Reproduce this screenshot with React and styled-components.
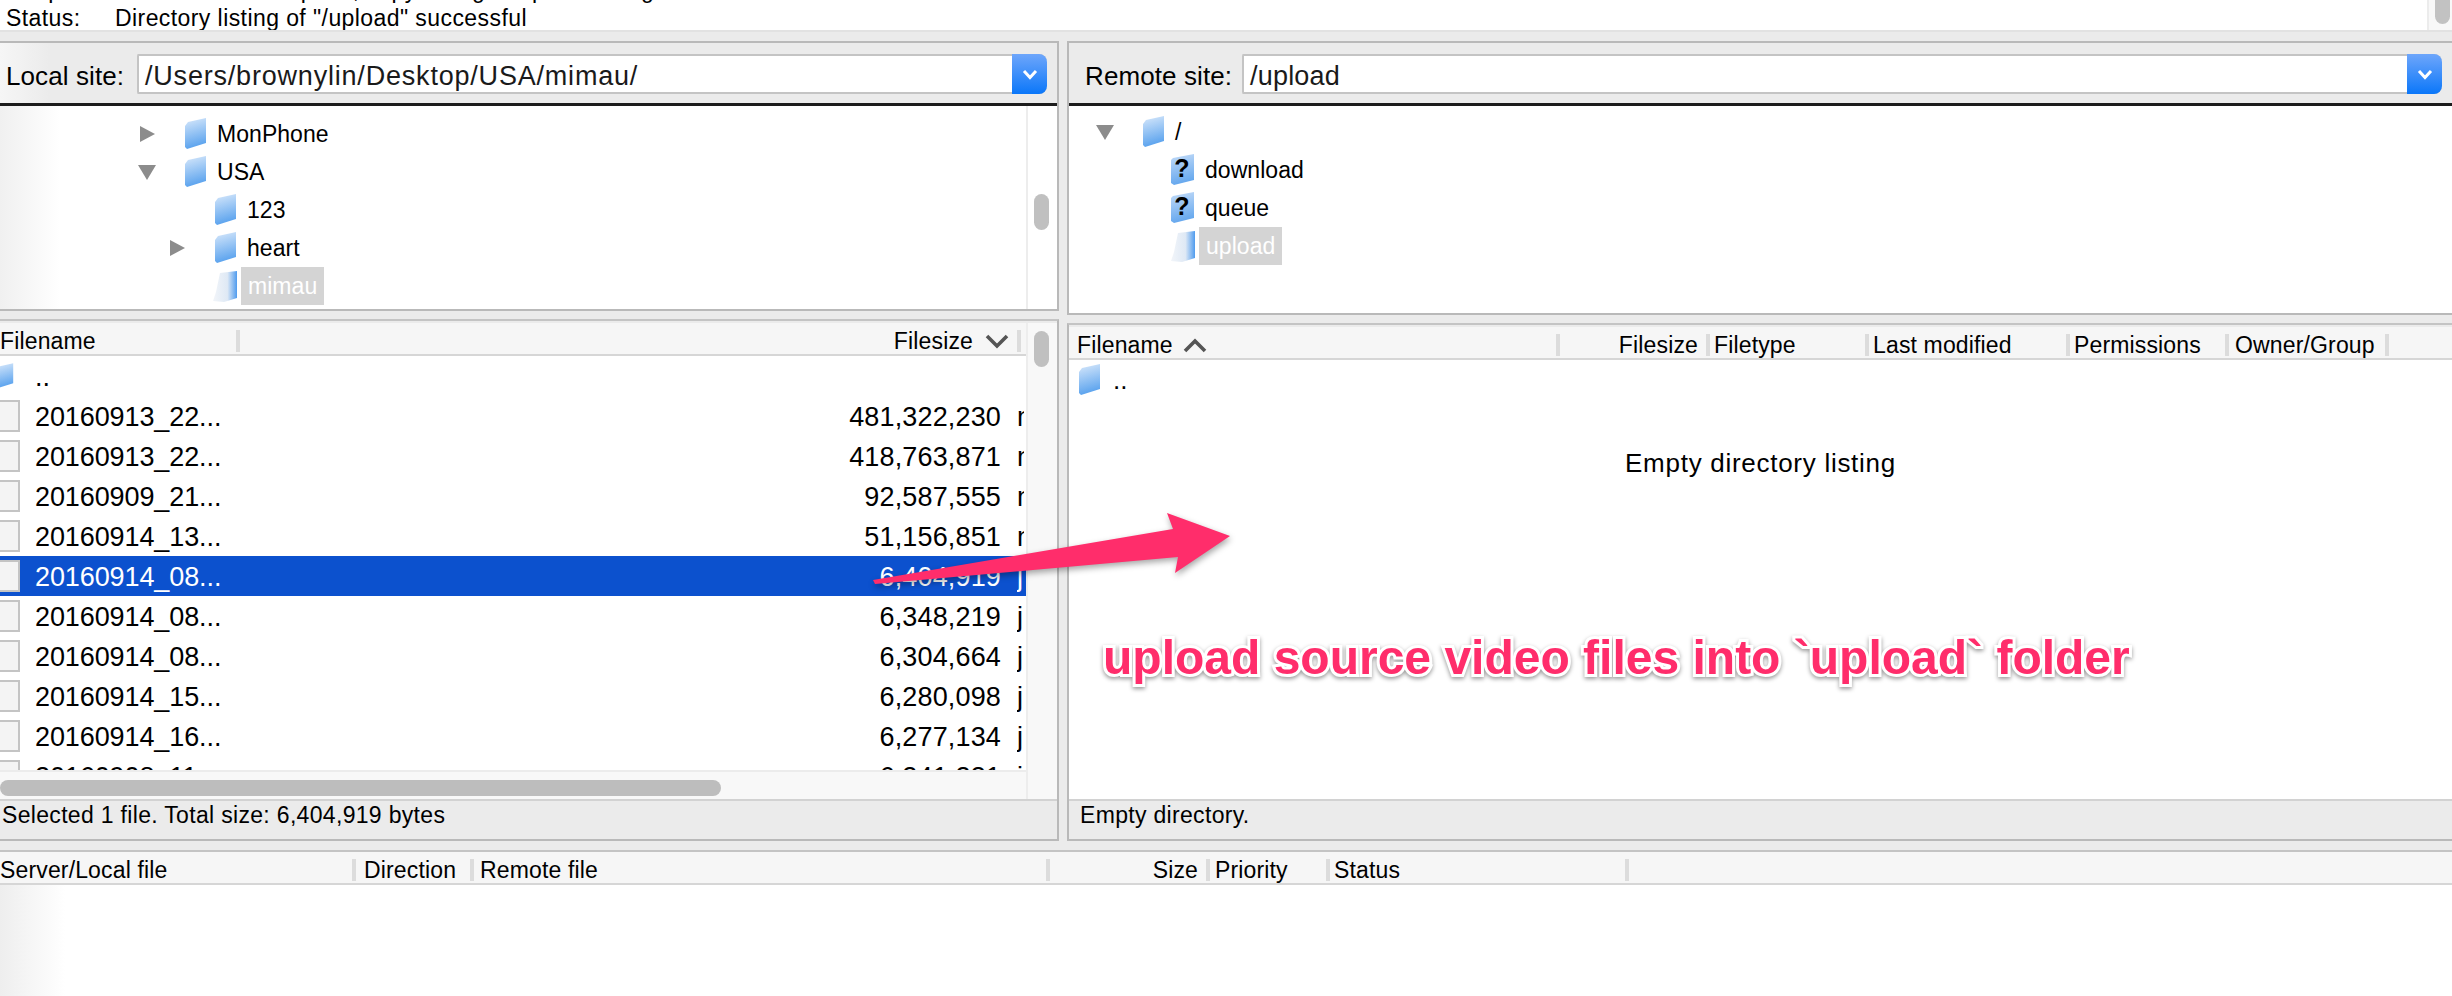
import React from "react";
import styled, { createGlobalStyle } from "styled-components";

const Global = createGlobalStyle`
  html, body { margin: 0; padding: 0; background: #ebebeb; }
  body { font-family: "Liberation Sans", Arial, sans-serif; color: #000; }
`;

const Page = styled.div`
  position: relative;
  width: 2452px;
  height: 996px;
  overflow: hidden;
  display: flex;
  flex-direction: column;
  background: #ebebeb;
`;

const Log = styled.div`
  height: 30px;
  flex: none;
  display: flex;
  background: #fff;
  border-bottom: 2px solid #e2e2e2;
  overflow: hidden;
`;
const LogText = styled.div`
  flex: 1;
  margin-top: -22px;
  padding-left: 6px;
  font-size: 23px;
  letter-spacing: 0.42px;
`;
const LogLine = styled.div`
  display: flex;
  height: ${(p) => p.$h}px;
  line-height: 25px;
`;
const LogKey = styled.span`
  width: 109px;
  flex: none;
`;
const LogTrack = styled.div`
  width: 25px;
  flex: none;
  background: #f8f8f8;
  border-left: 2px solid #ececec;
  box-sizing: border-box;
  padding-left: 6px;
`;
const LogThumb = styled.div`
  width: 15px;
  height: 24px;
  background: #c2c2c2;
  border-radius: 0 0 8px 8px;
`;

const Panes = styled.div`
  display: grid;
  grid-template-columns: 1059px 1385px;
  column-gap: 8px;
  margin-top: 9px;
  flex: none;
`;
const Side = styled.div`
  display: flex;
  flex-direction: column;
  row-gap: 8px;
`;
const SitePanel = styled.section`
  height: ${(p) => (p.$remote ? "274px" : "270px")};
  box-sizing: border-box;
  display: flex;
  flex-direction: column;
  border-top: 2px solid #b9b9b9;
  border-bottom: 2px solid #b9b9b9;
  border-left: ${(p) => (p.$remote ? "2px solid #b9b9b9" : "none")};
  border-right: ${(p) => (p.$remote ? "none" : "2px solid #b9b9b9")};
`;
const SiteBar = styled.div`
  height: 63px;
  flex: none;
  box-sizing: border-box;
  display: flex;
  align-items: flex-start;
  padding: 11px 10px 0 ${(p) => (p.$remote ? "16px" : "6px")};
  border-bottom: 3px solid #1c1c1c;
  background: ${(p) =>
    p.$remote ? "#ebebeb" : "linear-gradient(90deg,#f6f6f6 0,#ebebeb 50px)"};
`;
const SiteLabel = styled.span`
  font-size: 26px;
  line-height: 44px;
  white-space: nowrap;
  width: ${(p) => p.$w}px;
  flex: none;
  letter-spacing: 0.1px;
`;
const Combo = styled.div`
  flex: 1;
  height: 40px;
  display: flex;
  box-sizing: border-box;
  border: 2px solid #c4c4c4;
  border-right: none;
  border-radius: 2px 8px 8px 2px;
  background: #fff;
`;
const ComboText = styled.span`
  flex: 1;
  padding-left: 6px;
  font-size: 27px;
  line-height: 40px;
  color: #1a1a1a;
  letter-spacing: ${(p) => p.$spacing}px;
`;
const ComboButton = styled.span`
  width: 35px;
  height: 40px;
  margin-top: -2px;
  flex: none;
  display: flex;
  align-items: center;
  justify-content: center;
  background: linear-gradient(180deg, #6ea6fb 0%, #0b77f9 100%);
  border-radius: 0 8px 8px 0;
`;
const Tree = styled.div`
  flex: 1;
  display: flex;
  min-height: 0;
  background: ${(p) =>
    p.$remote ? "#fff" : "linear-gradient(90deg,#f0f0f0 0,#fff 60px)"};
`;
const TreeBody = styled.div`
  flex: 1;
  padding-top: ${(p) => (p.$remote ? "7px" : "9px")};
  overflow: hidden;
`;
const TreeRow = styled.div`
  height: 38px;
  display: flex;
  align-items: center;
  padding-left: ${(p) => p.$indent}px;
  font-size: 23px;
`;
const Toggle = styled.span`
  width: 15px;
  flex: none;
  display: flex;
  justify-content: center;
`;
const ArrowRight = styled.span`
  width: 0;
  height: 0;
  border-top: 8px solid transparent;
  border-bottom: 8px solid transparent;
  border-left: 15px solid #8c8c8c;
`;
const ArrowDown = styled.span`
  width: 0;
  height: 0;
  flex: none;
  margin-left: -2px;
  border-left: 9px solid transparent;
  border-right: 9px solid transparent;
  border-top: 15px solid #8c8c8c;
`;
const TreeIcon = styled.span`
  margin-left: 27px;
  width: 25px;
  height: 32px;
  flex: none;
  display: flex;
`;
const TreeText = styled.span`
  margin-left: ${(p) => (p.$selected ? "4px" : "10px")};
  padding: 0 ${(p) => (p.$selected ? "7px" : "0")};
  line-height: 38px;
  background: ${(p) => (p.$selected ? "#d4d4d4" : "transparent")};
  color: ${(p) => (p.$selected ? "#fff" : "#000")};
  letter-spacing: 0.05px;
`;
const ScrollTrack = styled.div`
  width: 31px;
  flex: none;
  box-sizing: border-box;
  background: ${(p) => (p.$plain ? "#fff" : "#f8f8f8")};
  border-left: 2px solid #ededed;
  padding: ${(p) => p.$top}px 0 0 6px;
`;
const ScrollThumb = styled.div`
  width: 15px;
  height: 36px;
  border-radius: 8px;
  background: #c0c0c0;
`;

const ListPanel = styled.section`
  height: ${(p) => (p.$remote ? "518px" : "522px")};
  box-sizing: border-box;
  display: flex;
  flex-direction: column;
  border-top: 2px solid #c4c4c4;
  border-bottom: 2px solid #b9b9b9;
  border-left: ${(p) => (p.$remote ? "2px solid #b9b9b9" : "none")};
  border-right: ${(p) => (p.$remote ? "none" : "2px solid #b9b9b9")};
`;
const ListArea = styled.div`
  height: ${(p) => (p.$remote ? "472px" : "476px")};
  flex: none;
  display: flex;
  background: #fff;
  padding-top: 2px;
  background-clip: content-box;
`;
const ListMain = styled.div`
  flex: 1;
  min-width: 0;
  display: flex;
  flex-direction: column;
`;
const HeaderRow = styled.div`
  height: 33px;
  flex: none;
  box-sizing: border-box;
  padding-top: 5px;
  display: flex;
  align-items: center;
  background: #f6f6f6;
  border-bottom: 2px solid #d6d6d6;
  font-size: 23px;
  letter-spacing: 0.15px;
  white-space: nowrap;
  overflow: hidden;
`;
const HeaderCell = styled.span`
  width: ${(p) => p.$w}px;
  flex: none;
  box-sizing: border-box;
  display: flex;
  align-items: center;
  justify-content: ${(p) => (p.$right ? "flex-end" : "flex-start")};
  padding: ${(p) => (p.$right ? "0 8px 0 0" : `0 0 0 ${p.$pad ?? 4}px`)};
`;
const HeaderSep = styled.span`
  width: 4px;
  height: 22px;
  flex: none;
  background: #dcdcdc;
`;
const SortChevron = styled.svg`
  margin-left: ${(p) => p.$gap}px;
  flex: none;
`;
const Rows = styled.div`
  flex: 1;
  min-height: 0;
  overflow: hidden;
`;
const FileRow = styled.div`
  height: 40px;
  box-sizing: border-box;
  display: flex;
  align-items: center;
  font-size: 27px;
  background: ${(p) => (p.$selected ? "#0c51ce" : "transparent")};
  color: ${(p) => (p.$selected ? "#fff" : "#000")};
`;
const FileIcon = styled.span`
  width: ${(p) => p.$w ?? 20}px;
  height: 32px;
  margin-left: ${(p) => p.$offset ?? 0}px;
  flex: none;
  display: flex;
  overflow: hidden;
`;
const FileName = styled.span`
  margin-left: ${(p) => p.$gap ?? 15}px;
  flex: 1;
  padding-top: 2px;
  letter-spacing: -0.1px;
`;
const FileSize = styled.span`
  width: 200px;
  flex: none;
  padding-top: 2px;
  text-align: right;
  letter-spacing: 0.15px;
`;
const FileType = styled.span`
  width: 7px;
  margin-left: 16px;
  margin-right: 2px;
  padding-top: 2px;
  flex: none;
  overflow: hidden;
  white-space: nowrap;
`;
const HScroll = styled.div`
  height: 29px;
  flex: none;
  box-sizing: border-box;
  padding-top: 8px;
  background: #f8f8f8;
  border-top: 2px solid #ececec;
`;
const HThumb = styled.div`
  width: 721px;
  height: 16px;
  border-radius: 8px;
  background: #bdbdbd;
`;
const StatusBar = styled.div`
  flex: 1;
  display: flex;
  align-items: flex-start;
  padding: 0 0 0 ${(p) => (p.$remote ? "11px" : "2px")};
  border-top: 2px solid #d2d2d2;
  font-size: 23px;
  line-height: 28px;
  letter-spacing: 0.32px;
`;
const EmptyRow = styled.div`
  height: 40px;
  display: flex;
  align-items: center;
  padding-left: 7px;
  font-size: 26px;
`;
const UpName = styled.span`
  margin-left: ${(p) => p.$gap}px;
`;
const EmptyMessage = styled.div`
  margin-top: 43px;
  text-align: center;
  font-size: 26px;
  letter-spacing: 0.72px;
  line-height: 40px;
`;

const Queue = styled.section`
  margin-top: 9px;
  flex: 1;
  display: flex;
  flex-direction: column;
  border-top: 2px solid #c4c4c4;
`;
const QueueBody = styled.div`
  flex: 1;
  background: linear-gradient(90deg, #eeeeee 0, #fff 65px);
`;

const Overlay = styled.svg`
  position: absolute;
  left: 860px;
  top: 500px;
  filter: drop-shadow(1px 3px 3px rgba(0, 0, 0, 0.35));
`;
const Annotation = styled.div`
  position: absolute;
  left: 1103px;
  top: 630px;
  font-size: 48px;
  line-height: 56px;
  font-weight: 700;
  white-space: nowrap;
  color: #ff2d6b;
  -webkit-text-stroke: 6px #fff;
  paint-order: stroke fill;
  filter: drop-shadow(0 2px 2px rgba(0, 0, 0, 0.4));
`;
const SoftIcon = styled.svg`
  filter: blur(0.6px);
`;

const Folder = ({ id = "f" }) => (
  <SoftIcon width="25" height="32" viewBox="0 0 25 32">
    <defs>
      <linearGradient id={id} x1="0" y1="0" x2="0.2" y2="1">
        <stop offset="0" stopColor="#d9e9fb" />
        <stop offset="1" stopColor="#5ba3ee" />
      </linearGradient>
    </defs>
    <path d="M6 4 L24 0 V25 L5 31 L3 29 V8 Z" fill={`url(#${id})`} />
  </SoftIcon>
);
const OpenFolder = ({ id = "o" }) => (
  <SoftIcon width="25" height="32" viewBox="0 0 25 32">
    <defs>
      <linearGradient id={id} x1="0" y1="0" x2="1" y2="0">
        <stop offset="0" stopColor="#f2f5f9" />
        <stop offset="0.6" stopColor="#dfe9f5" />
        <stop offset="1" stopColor="#4f9bee" />
      </linearGradient>
    </defs>
    <path d="M8 3 L25 1 V28 L12 32 L1 31 L4 22 Z" fill={`url(#${id})`} />
  </SoftIcon>
);
const UnknownFolder = ({ id }) => (
  <svg width="25" height="32" viewBox="0 0 25 32">
    <defs>
      <linearGradient id={id} x1="0" y1="0" x2="0.2" y2="1">
        <stop offset="0" stopColor="#c4dcf8" />
        <stop offset="1" stopColor="#66a8ee" />
      </linearGradient>
    </defs>
    <path d="M3 4 L24 0 V26 L4 31 L1 29 V6 Z" fill={`url(#${id})`} />
    <text x="12" y="23" fontSize="25" fontWeight="700" textAnchor="middle" fontFamily="Liberation Sans" fill="#000">?</text>
  </svg>
);
const Doc = () => (
  <svg width="20" height="32" viewBox="0 0 20 32">
    <rect x="-10" y="1" width="29" height="30" fill="#f4f4f4" stroke="#c4c4c4" strokeWidth="2" />
  </svg>
);
const ComboChevron = () => (
  <svg width="16" height="11" viewBox="0 0 16 11">
    <path d="M2 2 L8 8.5 L14 2" fill="none" stroke="#fff" strokeWidth="3" />
  </svg>
);
const Chevron = ({ up, gap }) => (
  <SortChevron $gap={gap} width="24" height="15" viewBox="0 0 24 15">
    <path d={up ? "M2 13 L12 3 L22 13" : "M2 2 L12 12 L22 2"} fill="none" stroke="#555" strokeWidth="3.6" />
  </SortChevron>
);

const files = [
  ["20160913_22...", "481,322,230", "mp4-file"],
  ["20160913_22...", "418,763,871", "mp4-file"],
  ["20160909_21...", "92,587,555", "mp4-file"],
  ["20160914_13...", "51,156,851", "mp4-file"],
  ["20160914_08...", "6,404,919", "jpg-file", true],
  ["20160914_08...", "6,348,219", "jpg-file"],
  ["20160914_08...", "6,304,664", "jpg-file"],
  ["20160914_15...", "6,280,098", "jpg-file"],
  ["20160914_16...", "6,277,134", "jpg-file"],
  ["20160908_11...", "6,241,231", "jpg-file"],
];

function SiteHead({ remote, label, width, path, spacing }) {
  return (
    <SiteBar $remote={remote}>
      <SiteLabel $w={width}>{label}</SiteLabel>
      <Combo>
        <ComboText $spacing={spacing}>{path}</ComboText>
        <ComboButton><ComboChevron /></ComboButton>
      </Combo>
    </SiteBar>
  );
}

function TreeItem({ indent, toggle, icon, children, selected }) {
  return (
    <TreeRow $indent={indent}>
      <Toggle>{toggle === "right" ? <ArrowRight /> : toggle === "down" ? <ArrowDown /> : null}</Toggle>
      <TreeIcon>{icon}</TreeIcon>
      <TreeText $selected={selected}>{children}</TreeText>
    </TreeRow>
  );
}

export default function App() {
  return (
    <Page>
      <Global />
      <Log>
        <LogText>
          <LogLine $h={28}><LogKey>Response:</LogKey>226 Transfer complete, copy listing of upload using data</LogLine>
          <LogLine $h={25}><LogKey>Status:</LogKey>Directory listing of "/upload" successful</LogLine>
        </LogText>
        <LogTrack><LogThumb /></LogTrack>
      </Log>
      <Panes>
        <Side>
          <SitePanel>
            <SiteHead label="Local site:" width={131} path="/Users/brownylin/Desktop/USA/mimau/" spacing={0.8} />
            <Tree>
              <TreeBody>
                <TreeItem indent={140} toggle="right" icon={<Folder id="l1" />}>MonPhone</TreeItem>
                <TreeItem indent={140} toggle="down" icon={<Folder id="l2" />}>USA</TreeItem>
                <TreeItem indent={170} icon={<Folder id="l3" />}>123</TreeItem>
                <TreeItem indent={170} toggle="right" icon={<Folder id="l4" />}>heart</TreeItem>
                <TreeItem indent={170} icon={<OpenFolder id="l5" />} selected>mimau</TreeItem>
              </TreeBody>
              <ScrollTrack $plain $top={88}><ScrollThumb /></ScrollTrack>
            </Tree>
          </SitePanel>
          <ListPanel>
            <ListArea>
              <ListMain>
                <HeaderRow>
                  <HeaderCell $w={236} $pad={0}>Filename</HeaderCell>
                  <HeaderSep />
                  <HeaderCell $w={777} $right>Filesize<Chevron gap={12} /></HeaderCell>
                  <HeaderSep />
                </HeaderRow>
                <Rows>
                  <FileRow><FileIcon $offset={-6}><Folder id="up1" /></FileIcon><FileName $gap={21}>..</FileName></FileRow>
                  {files.map(([name, size, type, selected], i) => (
                    <FileRow key={i} $selected={selected}>
                      <FileIcon><Doc /></FileIcon>
                      <FileName>{name}</FileName>
                      <FileSize>{size}</FileSize>
                      <FileType>{type}</FileType>
                    </FileRow>
                  ))}
                </Rows>
                <HScroll><HThumb /></HScroll>
              </ListMain>
              <ScrollTrack $top={8}><ScrollThumb /></ScrollTrack>
            </ListArea>
            <StatusBar>Selected 1 file. Total size: 6,404,919 bytes</StatusBar>
          </ListPanel>
        </Side>
        <Side>
          <SitePanel $remote>
            <SiteHead remote label="Remote site:" width={157} path="/upload" spacing={0.2} />
            <Tree $remote>
              <TreeBody $remote>
                <TreeItem indent={29} toggle="down" icon={<Folder id="r1" />}>/</TreeItem>
                <TreeItem indent={59} icon={<UnknownFolder id="r2" />}>download</TreeItem>
                <TreeItem indent={59} icon={<UnknownFolder id="r3" />}>queue</TreeItem>
                <TreeItem indent={59} icon={<OpenFolder id="r4" />} selected>upload</TreeItem>
              </TreeBody>
            </Tree>
          </SitePanel>
          <ListPanel $remote>
            <ListArea $remote>
              <ListMain>
                <HeaderRow>
                  <HeaderCell $w={487} $pad={8}>Filename<Chevron up gap={10} /></HeaderCell>
                  <HeaderSep />
                  <HeaderCell $w={146} $right>Filesize</HeaderCell>
                  <HeaderSep />
                  <HeaderCell $w={155}>Filetype</HeaderCell>
                  <HeaderSep />
                  <HeaderCell $w={197}>Last modified</HeaderCell>
                  <HeaderSep />
                  <HeaderCell $w={155}>Permissions</HeaderCell>
                  <HeaderSep />
                  <HeaderCell $w={156} $pad={6}>Owner/Group</HeaderCell>
                  <HeaderSep />
                </HeaderRow>
                <Rows>
                  <EmptyRow><FileIcon $w={25}><Folder id="up2" /></FileIcon><UpName $gap={12}>..</UpName></EmptyRow>
                  <EmptyMessage>Empty directory listing</EmptyMessage>
                </Rows>
              </ListMain>
            </ListArea>
            <StatusBar $remote>Empty directory.</StatusBar>
          </ListPanel>
        </Side>
      </Panes>
      <Queue>
        <HeaderRow>
          <HeaderCell $w={352} $pad={0}>Server/Local file</HeaderCell>
          <HeaderSep />
          <HeaderCell $w={114} $pad={8}>Direction</HeaderCell>
          <HeaderSep />
          <HeaderCell $w={572} $pad={6}>Remote file</HeaderCell>
          <HeaderSep />
          <HeaderCell $w={156} $right>Size</HeaderCell>
          <HeaderSep />
          <HeaderCell $w={116} $pad={5}>Priority</HeaderCell>
          <HeaderSep />
          <HeaderCell $w={295}>Status</HeaderCell>
          <HeaderSep />
        </HeaderRow>
        <QueueBody />
      </Queue>
      <Overlay width="380" height="90" viewBox="0 0 380 90">
        <path d="M13 80 L313 29 L307 13 L370 36 L315 73 L318 57 L15 84 Z" fill="#ff2d6b" />
      </Overlay>
      <Annotation>upload source video files into `upload` folder</Annotation>
    </Page>
  );
}
